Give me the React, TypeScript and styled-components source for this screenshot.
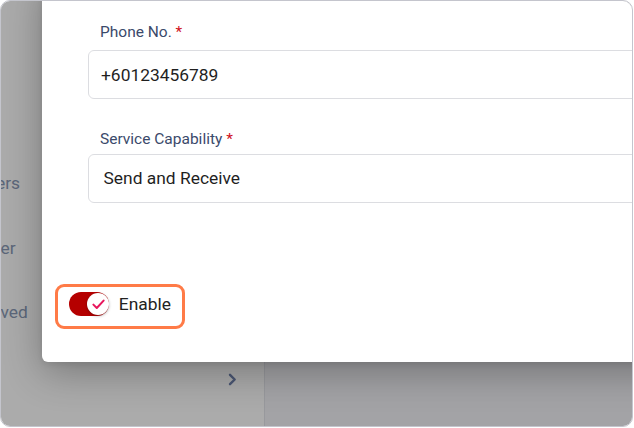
import styled, { createGlobalStyle } from "styled-components";

const GlobalStyle = createGlobalStyle`
  html, body {
    margin: 0;
    padding: 0;
    background: #ffffff;
  }
  body {
    font-family: Roboto, "Noto Sans", Arial, sans-serif;
  }
  * {
    box-sizing: border-box;
  }
`;

const navItems = ["Partners", "Reseller", "Approved"];

export default function App() {
  return (
    <>
      <GlobalStyle />
      <Frame>
        <Page>
          <Sidebar>
            <NavList>
              {navItems.map((item) => (
                <NavItem key={item}>{item}</NavItem>
              ))}
            </NavList>
            <CollapseRow>
              <svg width="9" height="13" viewBox="0 0 9 13" fill="none">
                <path
                  d="M2 1.8 L6.7 6.5 L2 11.2"
                  stroke="currentColor"
                  strokeWidth="2.4"
                  strokeLinecap="round"
                  strokeLinejoin="round"
                />
              </svg>
            </CollapseRow>
          </Sidebar>
          <Main />
        </Page>

        <Backdrop />

        <Modal>
          <Form>
            <Field>
              <Label>
                Phone No. <Required>*</Required>
              </Label>
              <Input>+60123456789</Input>
            </Field>
            <Field $gap={5}>
              <Label>
                Service Capability <Required>*</Required>
              </Label>
              <SelectBox>Send and Receive</SelectBox>
            </Field>
          </Form>

          <Footer>
            <Highlight>
              <Track>
                <Knob>
                  <svg width="13" height="11" viewBox="0 0 13 11" fill="none">
                    <path
                      d="M1.4 5.6 L4.8 9 L11.6 1.6"
                      stroke="#e8175d"
                      strokeWidth="2"
                      strokeLinecap="round"
                      strokeLinejoin="round"
                    />
                  </svg>
                </Knob>
              </Track>
              <ToggleText>Enable</ToggleText>
            </Highlight>
          </Footer>
        </Modal>
      </Frame>
    </>
  );
}

const Frame = styled.div`
  position: relative;
  width: 633px;
  height: 427px;
  border: 1px solid #c4c5cd;
  border-radius: 10px;
  overflow: hidden;
  background: #f3f4f8;
`;

const Page = styled.div`
  display: flex;
  height: 100%;
`;

const Sidebar = styled.div`
  width: 264px;
  flex-shrink: 0;
  display: flex;
  flex-direction: column;
  background: #ffffff;
  border-right: 1px solid #e3e4ea;
`;

const NavList = styled.div`
  display: flex;
  flex-direction: column;
  padding-top: 150px;
  margin-left: -47px;
`;

const NavItem = styled.div`
  height: 64.5px;
  display: flex;
  align-items: center;
  font-size: 17.4px;
  color: #8a9ab6;
  white-space: nowrap;
`;

const CollapseRow = styled.div`
  margin-top: auto;
  margin-bottom: 15px;
  height: 64px;
  display: flex;
  align-items: center;
  justify-content: flex-end;
  padding-right: 27px;
  color: #7082ad;
`;

const Main = styled.div`
  flex: 1;
  background: #f3f4f8;
`;

const Backdrop = styled.div`
  position: absolute;
  inset: 0;
  background: rgba(0, 0, 0, 0.33);
`;

const Modal = styled.div`
  position: absolute;
  left: 41px;
  top: -24px;
  width: 700px;
  height: 385px;
  background: #ffffff;
  border-radius: 6px;
  box-shadow: 0 10px 38px rgba(0, 0, 0, 0.3), 0 2px 6px rgba(0, 0, 0, 0.08);
  display: flex;
  flex-direction: column;
`;

const Form = styled.div`
  display: flex;
  flex-direction: column;
  gap: 29.5px;
  padding: 45px 0 0 46px;
`;

const Field = styled.div<{ $gap?: number }>`
  display: flex;
  flex-direction: column;
  gap: ${(p) => p.$gap ?? 8}px;
`;

const Label = styled.div`
  padding-left: 12px;
  font-size: 15.5px;
  line-height: 20px;
  color: #3b4a6b;
`;

const Required = styled.span`
  color: #d0101b;
`;

const Input = styled.div`
  height: 49px;
  width: 600px;
  display: flex;
  align-items: center;
  padding-left: 12px;
  border: 1px solid #dcdde1;
  border-radius: 6px;
  font-size: 17.4px;
  color: #1f1f1f;
`;

const SelectBox = styled(Input)`
  padding-left: 14.5px;
`;

const Footer = styled.div`
  margin-top: auto;
  padding: 0 0 33.5px 13px;
  display: flex;
`;

const Highlight = styled.div`
  height: 45px;
  display: flex;
  align-items: center;
  gap: 9.5px;
  padding: 0 11px 4px 11.3px;
  border: 3px solid #ff7b47;
  border-radius: 9px;
`;

const Track = styled.div`
  position: relative;
  width: 40px;
  height: 24px;
  border-radius: 12px;
  background: #b50000;
`;

const Knob = styled.div`
  position: absolute;
  right: 0;
  top: 1px;
  width: 22px;
  height: 22px;
  border-radius: 50%;
  background: #ffffff;
  box-shadow: 0 1px 3px rgba(0, 0, 0, 0.3);
  display: flex;
  align-items: center;
  justify-content: center;
`;

const ToggleText = styled.span`
  font-size: 17.4px;
  color: #222222;
`;
